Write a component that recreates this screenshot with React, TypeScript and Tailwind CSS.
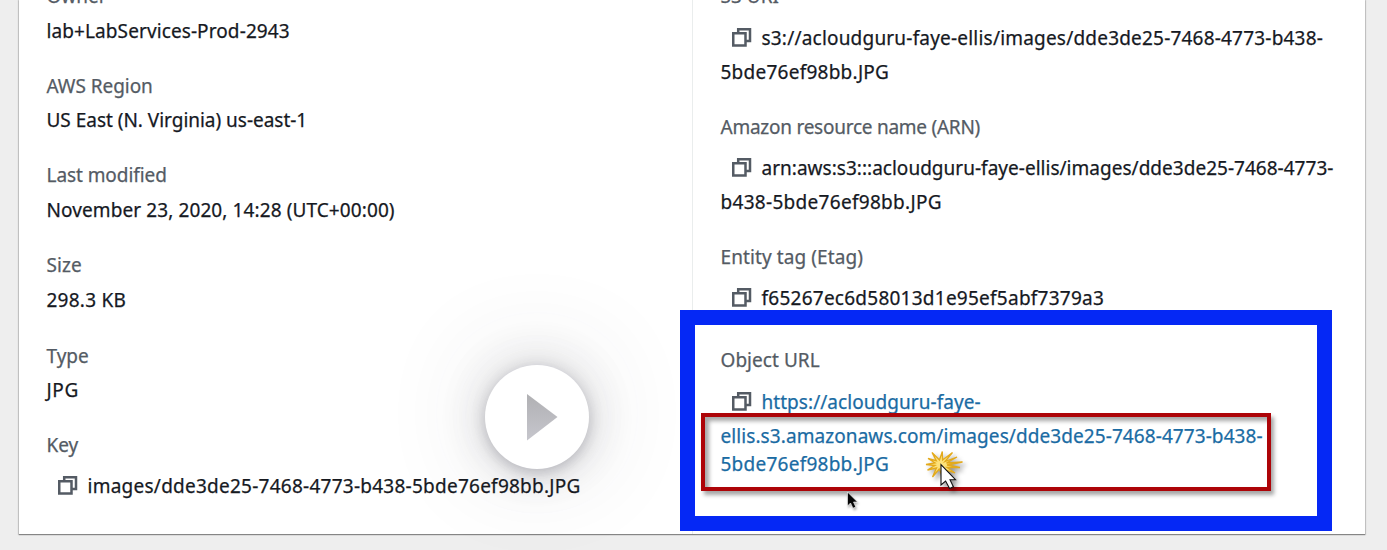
import type { ReactNode } from 'react';

function CopyIcon() {
  return (
    <svg viewBox="0 0 20 20" className="mt-[3px] mr-[10px] ml-[11px] h-5 w-5 shrink-0" fill="none" stroke="#545b64" strokeWidth="2.5">
      <path d="M1.25 6.25H13.5V18.5H1.25Z" />
      <path d="M6.2 5.5V2.25H18V14H14" />
    </svg>
  );
}

/* `className` carries the distance to the next baseline and the tracking. */
function Line({ className, icon, children }: { className: string; icon?: boolean; children: ReactNode }) {
  return (
    <div className={`flex items-start leading-[28px] whitespace-nowrap ${className}`}>
      {icon && <CopyIcon />}
      <span>{children}</span>
    </div>
  );
}

const label = 'text-[#545b64]';
const value = 'text-[#16191f]';
const link = 'text-[#1a6ba3]';

function PlayButton() {
  return (
    <div className="absolute top-[365px] left-[466px] flex h-[104px] w-[104px] items-center justify-center rounded-full bg-white shadow-[0_4px_14px_rgba(60,60,80,0.25),0_2px_46px_rgba(60,60,75,0.22),0_-4px_110px_rgba(60,60,70,0.16)]">
      <svg viewBox="0 0 32 48" className="ml-[10px] h-12 w-8">
        <defs>
          <linearGradient id="play" x1="0" y1="0" x2="0" y2="1">
            <stop offset="0" stopColor="#b0b0b3" />
            <stop offset="1" stopColor="#c6c6cd" />
          </linearGradient>
        </defs>
        <path d="M1 1V47.5L31.5 24Z" fill="url(#play)" />
      </svg>
    </div>
  );
}

function Pointer() {
  return (
    <svg viewBox="0 0 14 21" className="absolute top-[490px] left-[828px] h-[21px] w-[14px] drop-shadow-[1px_2px_1px_rgba(0,0,0,0.3)]">
      <path d="M0.5 2V16L3.5 13L6 18.2L8.8 17L6.5 12H10.5Z" fill="#050505" stroke="#fff" strokeWidth="0.6" />
    </svg>
  );
}

function ClickBurst() {
  return (
    <svg viewBox="0 0 44 48" className="absolute top-[449px] left-[905px] h-12 w-11 overflow-visible drop-shadow-[3px_3px_2px_rgba(0,0,0,0.4)]">
      <path
        d="M15.5 11L18.3 2.5L18.6 11L28.5 3.5L21 12.5L33 8L22.5 14L38.5 13L23 16L36 18.5L23 18.5L31 24L20 20.5L17 24L15.2 20L8.5 28L12.5 19L3.5 21L11 16.5L2 15.5L11 13.8L4 9.5L12.3 11.7L8 3.5Z"
        fill="#fde27a"
        stroke="#e3aa1c"
        strokeWidth="1.3"
      />
      <path d="M17 15.5V36L21.6 32L25.6 39.6L29.4 37.8L26 30.7H31.5Z" fill="#fff" stroke="#111" strokeWidth="1.1" />
    </svg>
  );
}

export default function App() {
  return (
    <div className="h-[550px] w-full overflow-hidden bg-[#eee] pr-[22px] pl-[19px] font-['Noto_Sans',sans-serif] text-[19px] [-webkit-text-stroke:0.25px]">
      <main className="relative flex h-[534px] w-full bg-white shadow-[0_0_1px_1px_rgba(0,0,0,0.14),0_1px_1px_0_rgba(0,0,0,0.35)]">
        <section className="-mt-[18px] w-[673px] shrink-0 pl-[27.5px]">
          <Line className={`${label} h-[35px]`}>Owner</Line>
          <Line className={`${value} h-[55px] tracking-[0.1px]`}>lab+LabServices-Prod-2943</Line>
          <Line className={`${label} h-[34px] tracking-[-0.05px]`}>AWS Region</Line>
          <Line className={`${value} h-[55px] tracking-[-0.02px]`}>US East (N. Virginia) us-east-1</Line>
          <Line className={`${label} h-[35px] tracking-[-0.07px]`}>Last modified</Line>
          <Line className={`${value} h-[55px] tracking-[0.1px]`}>November 23, 2020, 14:28 (UTC+00:00)</Line>
          <Line className={`${label} h-[35px] tracking-[0.1px]`}>Size</Line>
          <Line className={`${value} h-[56px] tracking-[0.25px]`}>298.3 KB</Line>
          <Line className={`${label} h-[34px]`}>Type</Line>
          <Line className={`${value} h-[55px] tracking-[0.6px]`}>JPG</Line>
          <Line className={`${label} h-[41px]`}>Key</Line>
          <Line icon className={`${value} relative z-10 h-[28px] tracking-[0.25px]`}>images/dde3de25-7468-4773-b438-5bde76ef98bb.JPG</Line>
        </section>

        <div className="h-full w-px shrink-0 bg-[#eaeded]" />

        <section className="-mt-[18px] min-w-0 flex-1 pl-[27.5px]">
          <Line className={`${label} h-[42px]`}>S3 URI</Line>
          <Line icon className={`${value} h-[34px] tracking-[0.2px]`}>s3://acloudguru-faye-ellis/images/dde3de25-7468-4773-b438-</Line>
          <Line className={`${value} h-[55px] tracking-[0.25px]`}>5bde76ef98bb.JPG</Line>
          <Line className={`${label} h-[41px] tracking-[-0.25px]`}>Amazon resource name (ARN)</Line>
          <Line icon className={`${value} h-[34px] tracking-[0.02px]`}>arn:aws:s3:::acloudguru-faye-ellis/images/dde3de25-7468-4773-</Line>
          <Line className={`${value} h-[55px] tracking-[0.3px]`}>b438-5bde76ef98bb.JPG</Line>
          <Line className={`${label} h-[41px] tracking-[0.1px]`}>Entity tag (Etag)</Line>
          <Line icon className={`${value} h-[62px] tracking-[0.25px]`}>f65267ec6d58013d1e95ef5abf7379a3</Line>
          <div className="relative z-10">
            <Line className={`${label} h-[42px] tracking-[0.05px]`}>Object URL</Line>
            <Line icon className={`${link} h-[34px] tracking-[0.05px]`}>https://acloudguru-faye-</Line>
            <Line className={`${link} h-[28px] tracking-[0.08px]`}>ellis.s3.amazonaws.com/images/dde3de25-7468-4773-b438-</Line>
            <Line className={`${link} h-[28px] tracking-[0.25px]`}>5bde76ef98bb.JPG</Line>
          </div>
        </section>

        <PlayButton />
        <div className="absolute top-[310px] left-[661px] h-[221px] w-[652px] border-[15px] border-[#0528f5] bg-white" />
        <div className="absolute top-[413px] left-[682px] z-20 h-[78px] w-[570px] border-4 border-[#ad0408] shadow-[3px_4px_4px_rgba(0,0,0,0.35),inset_4px_4px_4px_rgba(0,0,0,0.35)]" />
        <div className="absolute inset-0 z-30">
          <Pointer />
          <ClickBurst />
        </div>
      </main>
    </div>
  );
}
